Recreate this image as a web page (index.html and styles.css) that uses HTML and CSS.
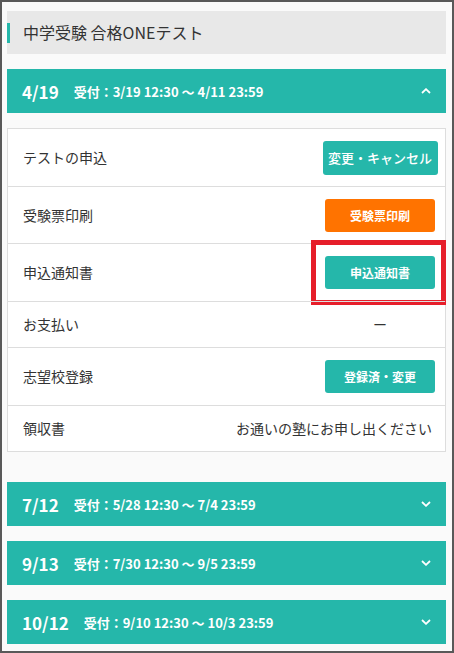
FILE: index.html
```html
<!DOCTYPE html>
<html lang="ja">
<head>
<meta charset="utf-8">
<title>中学受験 合格ONEテスト</title>
<link rel="stylesheet" href="styles.css">
</head>
<body>
<div class="frame">
  <h1 class="title">中学受験 合格ONEテスト</h1>
  <div class="list">
    <section class="item item-open">
      <div class="head">
        <span class="date">4/19</span>
        <span class="period">受付：3/19 12:30 〜 4/11 23:59</span>
        <svg class="chev" width="10" height="6" viewBox="0 0 10 6"><polyline points="1,5 5,1.2 9,5" fill="none" stroke="#fff" stroke-width="1.8"/></svg>
      </div>
      <div class="detail">
        <div class="row row-btn">
          <span class="label">テストの申込</span>
          <span class="action"><span class="btn btn-wide">変更・キャンセル</span></span>
        </div>
        <div class="row row-btn row-short">
          <span class="label">受験票印刷</span>
          <span class="action"><span class="btn btn-orange">受験票印刷</span></span>
        </div>
        <div class="row row-btn row-mark">
          <span class="label">申込通知書</span>
          <span class="action"><span class="btn">申込通知書</span></span>
          <span class="mark"></span>
        </div>
        <div class="row">
          <span class="label">お支払い</span>
          <span class="action dash">ー</span>
        </div>
        <div class="row row-btn">
          <span class="label">志望校登録</span>
          <span class="action"><span class="btn">登録済・変更</span></span>
        </div>
        <div class="row">
          <span class="label">領収書</span>
          <span class="note">お通いの塾にお申し出ください</span>
        </div>
      </div>
    </section>
    <section class="item">
      <div class="head">
        <span class="date">7/12</span>
        <span class="period">受付：5/28 12:30 〜 7/4 23:59</span>
        <svg class="chev" width="10" height="6" viewBox="0 0 10 6"><polyline points="1,1 5,4.8 9,1" fill="none" stroke="#fff" stroke-width="1.8"/></svg>
      </div>
    </section>
    <section class="item">
      <div class="head">
        <span class="date">9/13</span>
        <span class="period">受付：7/30 12:30 〜 9/5 23:59</span>
        <svg class="chev" width="10" height="6" viewBox="0 0 10 6"><polyline points="1,1 5,4.8 9,1" fill="none" stroke="#fff" stroke-width="1.8"/></svg>
      </div>
    </section>
    <section class="item">
      <div class="head">
        <span class="date">10/12</span>
        <span class="period">受付：9/10 12:30 〜 10/3 23:59</span>
        <svg class="chev" width="10" height="6" viewBox="0 0 10 6"><polyline points="1,1 5,4.8 9,1" fill="none" stroke="#fff" stroke-width="1.8"/></svg>
      </div>
    </section>
  </div>
</div>
</body>
</html>
```
FILE: styles.css
```css
* { box-sizing: border-box; }
html, body { margin: 0; padding: 0; }
body {
  font-family: "Noto Sans CJK JP", "Noto Sans", sans-serif;
  color: #333;
}
.frame {
  height: 100vh;
  border: 2px solid #595959;
  background: #fafafa;
  padding: 9px 6px 0 5px;
  overflow: hidden;
}
.title {
  margin: 0;
  height: 43px;
  background: #e8e8e8;
  font-size: 16px;
  font-weight: 400;
  line-height: 43px;
  padding-left: 16px;
  position: relative;
  color: #333;
}
.title::before {
  content: "";
  position: absolute;
  left: 0;
  top: 12px;
  width: 3px;
  height: 20px;
  background: #25b7aa;
}
.list {
  display: flex;
  flex-direction: column;
  gap: 15px;
  margin-top: 15px;
}
.item-open { margin-bottom: 15px; }
.head {
  height: 44px;
  background: #25b7aa;
  color: #fff;
  display: flex;
  align-items: center;
  padding: 0 15px;
  font-weight: 700;
}
.date {
  font-size: 17px;
  margin-right: 15px;
}
.period {
  font-size: 13px;
  flex: 1;
}
.chev { display: block; }
.detail {
  margin-top: 15px;
  background: #fff;
  border: 1px solid #dddddd;
}
.row {
  display: flex;
  align-items: center;
  justify-content: space-between;
  padding: 0 5px 0 15px;
  height: 46px;
  border-top: 1px solid #dddddd;
  font-size: 14px;
  line-height: 21px;
  position: relative;
}
.row-btn { height: 58px; }
.row-short { height: 57px; }
.row:first-child { border-top: none; height: 57px; }
.label { color: #333; }
.action {
  width: 120px;
  display: flex;
  justify-content: center;
}
.dash { color: #333; }
.note { padding-right: 8px; color: #333; }
.btn {
  display: flex;
  align-items: center;
  justify-content: center;
  width: 110px;
  height: 33px;
  border-radius: 3px;
  background: #25b7aa;
  color: #fff;
  font-size: 12px;
  font-weight: 700;
  white-space: nowrap;
}
.btn-wide {
  width: 115px;
  height: 34px;
  font-size: 13px;
  font-weight: 500;
}
.btn-orange { background: #ff7300; }
.mark {
  position: absolute;
  right: -1px;
  top: -4px;
  width: 135px;
  height: 65px;
  border: 5px solid #e61e2a;
}
```
